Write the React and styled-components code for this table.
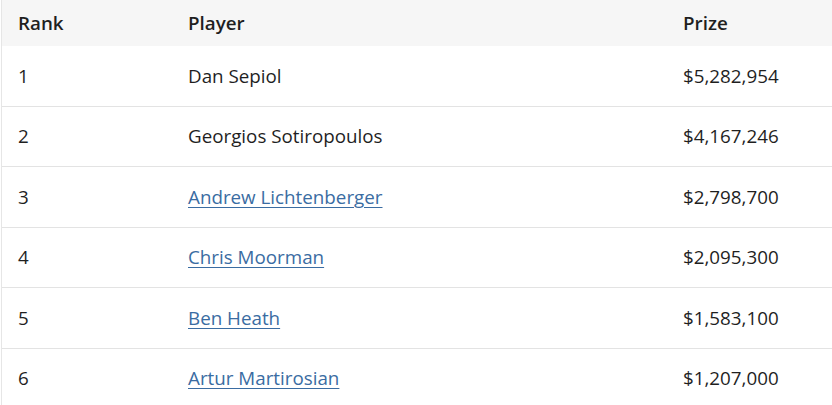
import React from "react";
import styled, { createGlobalStyle } from "styled-components";

const Global = createGlobalStyle`
  html, body { margin: 0; padding: 0; background: #fff; }
  body { font-family: "Open Sans", "Liberation Sans", sans-serif; }
`;

const Table = styled.div`
  width: 831px;
  border-left: 1px solid #e6e6e6;
  box-sizing: border-box;
  margin-left: 1px;
`;

const Row = styled.div`
  display: grid;
  grid-template-columns: 169px 494px 1fr;
  align-items: center;
  height: ${(p) => (p.$head ? "46px" : "59.5px")};
  background: ${(p) => (p.$head ? "#f6f6f6" : "#fff")};
  border-top: ${(p) => (p.$first || p.$head ? "none" : "1px solid #e3e3e3")};
  font-size: 18.8px;
  font-weight: ${(p) => (p.$head ? 600 : 400)};
  color: #1f1f1f;
`;

const Cell = styled.div`
  padding-left: ${(p) => (p.$pl ? p.$pl : "0")};
  white-space: nowrap;
`;

const PlayerLink = styled.a`
  color: #3a6ca2;
  text-decoration: underline;
  text-underline-offset: 3px;
  text-decoration-thickness: 1px;
`;

const data = [
  { rank: 1, name: "Dan Sepiol", prize: "$5,282,954" },
  { rank: 2, name: "Georgios Sotiropoulos", prize: "$4,167,246" },
  { rank: 3, name: "Andrew Lichtenberger", prize: "$2,798,700", link: true },
  { rank: 4, name: "Chris Moorman", prize: "$2,095,300", link: true },
  { rank: 5, name: "Ben Heath", prize: "$1,583,100", link: true },
  { rank: 6, name: "Artur Martirosian", prize: "$1,207,000", link: true },
];

export default function App() {
  return (
    <>
      <Global />
      <Table>
        <Row $head>
          <Cell $pl="16px">Rank</Cell>
          <Cell $pl="17px">Player</Cell>
          <Cell $pl="18px">Prize</Cell>
        </Row>
        {data.map((d, i) => (
          <Row key={d.rank} $first={i === 0}>
            <Cell $pl="16px">{d.rank}</Cell>
            <Cell $pl="17px">
              {d.link ? <PlayerLink href="#">{d.name}</PlayerLink> : d.name}
            </Cell>
            <Cell $pl="18px">{d.prize}</Cell>
          </Row>
        ))}
      </Table>
    </>
  );
}
